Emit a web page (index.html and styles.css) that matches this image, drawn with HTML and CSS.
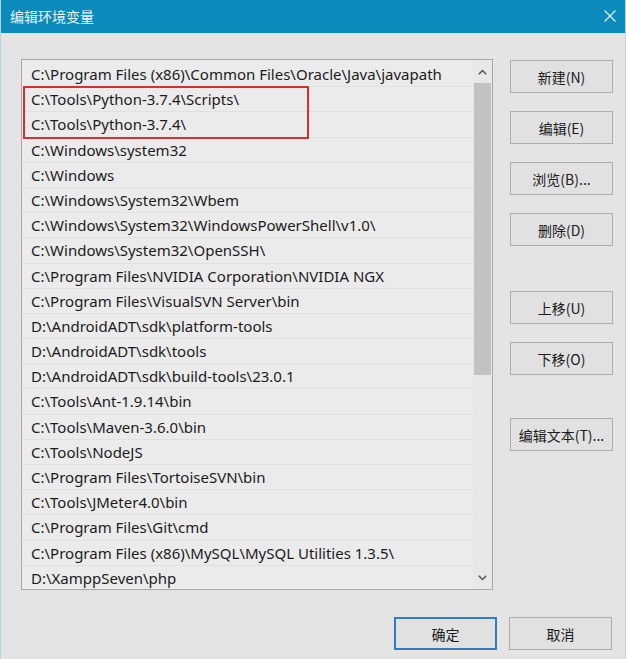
FILE: index.html
```html
<!DOCTYPE html>
<html lang="zh-CN">
<head>
<meta charset="utf-8">
<title>编辑环境变量</title>
<link rel="stylesheet" href="styles.css">
</head>
<body>
<div class="window">
  <div class="titlebar">
    <span class="title">编辑环境变量</span>
    <svg class="close" width="12" height="12" viewBox="0 0 12 12"><path d="M0.5 0.5 L11.5 11.5 M11.5 0.5 L0.5 11.5" stroke="#dff1f8" stroke-width="1.3" fill="none"/></svg>
  </div>
  <div class="content">
    <div class="listbox">
      <div class="rows">
        <div class="row">C:\Program Files (x86)\Common Files\Oracle\Java\javapath</div>
        <div class="row">C:\Tools\Python-3.7.4\Scripts\</div>
        <div class="row">C:\Tools\Python-3.7.4\</div>
        <div class="row">C:\Windows\system32</div>
        <div class="row">C:\Windows</div>
        <div class="row">C:\Windows\System32\Wbem</div>
        <div class="row">C:\Windows\System32\WindowsPowerShell\v1.0\</div>
        <div class="row">C:\Windows\System32\OpenSSH\</div>
        <div class="row">C:\Program Files\NVIDIA Corporation\NVIDIA NGX</div>
        <div class="row">C:\Program Files\VisualSVN Server\bin</div>
        <div class="row">D:\AndroidADT\sdk\platform-tools</div>
        <div class="row">D:\AndroidADT\sdk\tools</div>
        <div class="row">D:\AndroidADT\sdk\build-tools\23.0.1</div>
        <div class="row">C:\Tools\Ant-1.9.14\bin</div>
        <div class="row">C:\Tools\Maven-3.6.0\bin</div>
        <div class="row">C:\Tools\NodeJS</div>
        <div class="row">C:\Program Files\TortoiseSVN\bin</div>
        <div class="row">C:\Tools\JMeter4.0\bin</div>
        <div class="row">C:\Program Files\Git\cmd</div>
        <div class="row">C:\Program Files (x86)\MySQL\MySQL Utilities 1.3.5\</div>
        <div class="row">D:\XamppSeven\php</div>
      </div>
      <div class="scrollbar">
        <div class="arrow">
          <svg width="9" height="6" viewBox="0 0 9 6"><path d="M0.8 5.2 L4.5 1.5 L8.2 5.2" stroke="#555" stroke-width="1.5" fill="none"/></svg>
        </div>
        <div class="track"><div class="thumb"></div></div>
        <div class="arrow">
          <svg width="9" height="6" viewBox="0 0 9 6"><path d="M0.8 0.8 L4.5 4.5 L8.2 0.8" stroke="#555" stroke-width="1.5" fill="none"/></svg>
        </div>
      </div>
      <div class="highlight"></div>
    </div>
    <div class="side">
      <button class="btn b-new">新建(N)</button>
      <button class="btn b-gap">编辑(E)</button>
      <button class="btn b-gap">浏览(B)...</button>
      <button class="btn b-gap">删除(D)</button>
      <button class="btn b-gap2">上移(U)</button>
      <button class="btn b-gap">下移(O)</button>
      <button class="btn b-gap3">编辑文本(T)...</button>
    </div>
  </div>
  <div class="footer">
    <button class="btn primary">确定</button>
    <button class="btn">取消</button>
  </div>
</div>
</body>
</html>
```

FILE: styles.css
```css
html, body {
  margin: 0;
  padding: 0;
}
body {
  width: 626px;
  height: 659px;
  background: #e4e4e4;
  font-family: "Noto Sans", "Noto Sans CJK SC", sans-serif;
  font-size: 14px;
  color: #1b1b1b;
  overflow: hidden;
}
.window {
  height: 659px;
  box-sizing: border-box;
  border-left: 1px solid #b6d3e0;
  border-right: 1px solid #b6d3e0;
}
.titlebar {
  height: 33px;
  background: #0b8bbb;
  display: flex;
  align-items: center;
  justify-content: space-between;
  padding: 0 8px 0 9px;
}
.title {
  color: #e6f3f8;
  font-family: "Noto Sans CJK SC", sans-serif;
  font-size: 14px;
  position: relative;
  top: -1px;
}
.close {
  margin-right: 1px;
  position: relative;
  top: -1px;
}
.content {
  display: flex;
  align-items: flex-start;
  padding: 26px 0 0 20px;
}
.listbox {
  position: relative;
  width: 469px;
  border: 1px solid #a9a9a9;
  background: #ebebeb;
  display: flex;
  padding: 2px 0 0 1px;
  box-sizing: content-box;
  height: 527px;
}
.rows {
  flex: 1;
  min-width: 0;
}
.row {
  height: 25.2px;
  line-height: 24px;
  box-sizing: border-box;
  border-bottom: 1px solid #e0e0e0;
  padding-left: 8px;
  font-size: 15px;
  white-space: nowrap;
  overflow: hidden;
}
.scrollbar {
  width: 19px;
  margin-top: -2px;
  height: 529px;
  display: flex;
  flex-direction: column;
  background: #e8e8e8;
}
.arrow {
  height: 23px;
  display: flex;
  align-items: center;
  justify-content: center;
}
.track {
  flex: 1;
}
.thumb {
  height: 292px;
  margin-left: 1px;
  width: 17px;
  background: #c2c2c2;
}
.highlight {
  position: absolute;
  left: 1px;
  top: 26px;
  width: 282px;
  height: 49px;
  border: 2px solid #d3322c;
}
.side {
  margin-left: 17px;
  display: flex;
  flex-direction: column;
  padding-top: 1px;
}
.btn {
  width: 103px;
  height: 33px;
  box-sizing: border-box;
  background: #e1e1e1;
  border: 1px solid #adadad;
  font-family: "Noto Sans CJK SC", sans-serif;
  font-size: 14px;
  color: #1b1b1b;
  padding: 0;
}
.b-gap { margin-top: 18px; }
.b-gap2 { margin-top: 45px; }
.b-gap3 { margin-top: 43px; }
.footer {
  display: flex;
  justify-content: flex-end;
  gap: 12px;
  padding: 27px 13px 0 0;
}
.primary {
  border: 2px solid #2f7fc0;
}
```
